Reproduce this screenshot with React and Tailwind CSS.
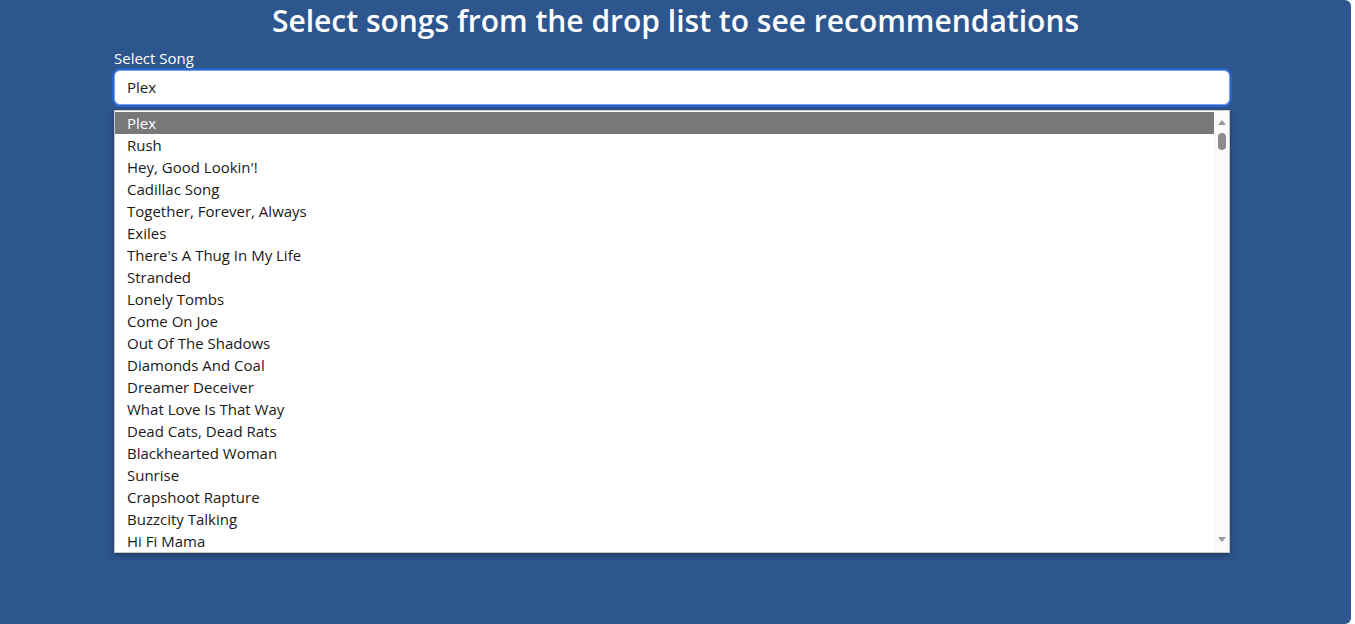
import React from 'react';

const songs = [
  'Plex',
  'Rush',
  "Hey, Good Lookin'!",
  'Cadillac Song',
  'Together, Forever, Always',
  'Exiles',
  "There's A Thug In My Life",
  'Stranded',
  'Lonely Tombs',
  'Come On Joe',
  'Out Of The Shadows',
  'Diamonds And Coal',
  'Dreamer Deceiver',
  'What Love Is That Way',
  'Dead Cats, Dead Rats',
  'Blackhearted Woman',
  'Sunrise',
  'Crapshoot Rapture',
  'Buzzcity Talking',
  'Hi Fi Mama',
];

const SongDropdown = ({ selected }) => (
  <div className="relative mt-[5px] flex h-[443px] w-[1116px] bg-white shadow-[0_2px_6px_rgba(0,0,0,0.35)] border border-[#c8c8c8]">
    <ul className="flex-1 overflow-hidden pt-[1px]">
      {songs.map((song) => (
        <li
          key={song}
          className={`h-[22px] pl-[12px] text-[15px] leading-[22px] ${
            song === selected ? 'bg-[#787878] text-white' : 'text-[#1a1a1a]'
          }`}
        >
          {song}
        </li>
      ))}
    </ul>
    {/* fake scrollbar */}
    <div className="flex w-[15px] flex-col items-center bg-[#fafafa]">
      <div className="mt-[9px] h-0 w-0 border-x-[4px] border-b-[5px] border-x-transparent border-b-[#9a9a9a]" />
      <div className="mt-[8px] h-[17px] w-[8px] rounded-full bg-[#8c8c8c]" />
      <div className="flex-1" />
      <div className="mb-[10px] h-0 w-0 border-x-[4px] border-t-[5px] border-x-transparent border-t-[#9a9a9a]" />
    </div>
  </div>
);

export default function App() {
  return (
    <div className="flex h-[624px] w-[1355px] bg-white font-['Open_Sans',sans-serif]">
      <div className="h-full w-[1351px] rounded-r-[6px] bg-[#2d568f]">
        <h1 className="pt-[2px] text-center text-[30px] font-semibold leading-[38px] text-white">
          Select songs from the drop list to see recommendations
        </h1>
        <div className="ml-[114px] mt-[8px] w-[1116px]">
          <label className="block text-[15px] leading-[20px] text-white">Select Song</label>
          <div className="mt-[2px] flex h-[35px] items-center rounded-[6px] border border-[#6ea0ee] bg-white pl-[12px] shadow-[0_0_0_2px_#2a64c4]">
            <span className="text-[15px] text-[#1a1a1a]">Plex</span>
          </div>
          <SongDropdown selected="Plex" />
        </div>
      </div>
    </div>
  );
}
